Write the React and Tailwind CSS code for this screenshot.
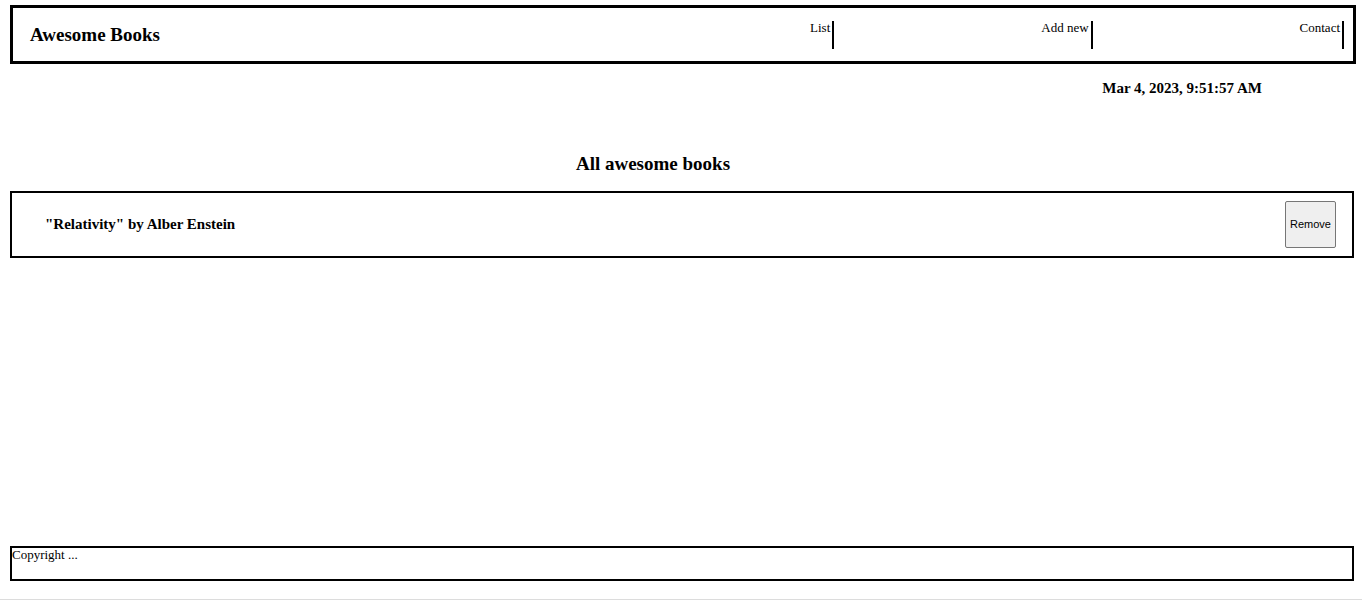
export default function App() {
  return (
    <div className="flex min-h-screen flex-col bg-white font-['Liberation_Serif',serif] text-black">
      <header className="ml-[10px] mt-[5px] flex h-[59px] w-[1346px] items-center justify-between border-[3px] border-black pl-[17px] pr-[9px]">
        <h3 className="text-[19px] font-bold leading-[22px]">Awesome Books</h3>
        <ul className="flex w-[741px]">
          {["List", "Add new", "Contact"].map((t) => (
            <li
              key={t}
              className="h-[28px] flex-auto border-r-2 border-black pr-[2px] text-right text-[13px] leading-[13px]"
            >
              {t}
            </li>
          ))}
        </ul>
      </header>

      <div className="mt-[16px] pr-[100px] text-right text-[15px] font-bold leading-[17px]">
        Mar 4, 2023, 9:51:57 AM
      </div>

      <h3 className="mt-[56px] pr-[56px] text-center text-[19px] font-bold leading-[22px]">
        All awesome books
      </h3>

      <div className="ml-[10px] mt-[16px] flex w-[1344px] items-center justify-between border-2 border-black py-2 pl-[33px] pr-[16px]">
        <p className="text-[15px] font-bold leading-[17px]">"Relativity" by Alber Enstein</p>
        <button className="h-[47px] rounded-[2px] border border-[#767676] bg-[#efefef] px-[4px] font-['Liberation_Sans',sans-serif] text-[11px] text-black">
          Remove
        </button>
      </div>

      <footer className="mb-[18px] ml-[10px] mt-auto h-[35px] w-[1344px] border-2 border-black text-[13px] leading-[13px]">
        Copyright ...
      </footer>
      <div className="h-px w-full bg-[#dcdcdc]" />
      <div className="h-[5px]" />
    </div>
  );
}
